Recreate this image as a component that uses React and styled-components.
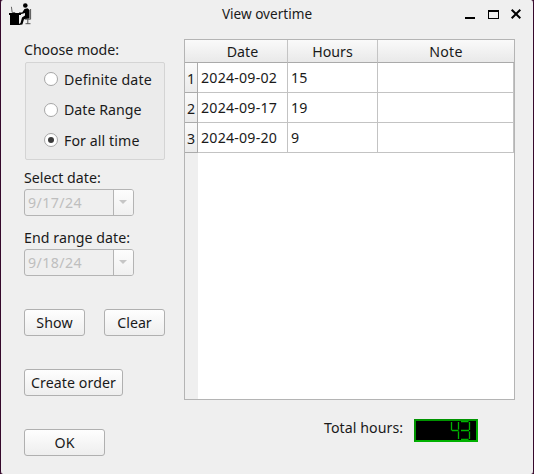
import React from "react";
import styled, { createGlobalStyle } from "styled-components";

const GlobalStyle = createGlobalStyle`
  body { margin: 0; background: #35082b; overflow: hidden; }
  * { box-sizing: border-box; }
`;

const Window = styled.div`
  width: 534px;
  height: 474px;
  border: solid #35082b;
  border-width: 0 1px;
  border-radius: 3px;
  background: #efefef;
  color: #1a1a1a;
  font: 14.2px/20px "Noto Sans", "Open Sans", sans-serif;
  white-space: nowrap;
`;

const TitleBar = styled.header`
  display: grid;
  grid-template-columns: 80px 1fr 80px;
  height: 28px;
  align-items: center;
`;

const TitleIcon = styled.svg`
  display: block;
  align-self: start;
  width: 24px;
  height: 24px;
  margin: 2px 0 0 7px;
`;

const Text = styled.span`
  letter-spacing: ${(p) => p.$track || 0}px;
`;

const Title = styled.h1`
  margin: 0;
  padding-bottom: 1px;
  font-size: 13.6px;
  font-weight: 400;
  text-align: center;
`;

const WindowControls = styled.svg`
  display: block;
  width: 80px;
  height: 28px;
`;

const Body = styled.main`
  display: grid;
  grid-template-columns: 141px 331px;
  column-gap: 19px;
  padding: 11px 0 0 23px;
`;

const Sidebar = styled.div`
  display: flex;
  flex-direction: column;
  align-items: flex-start;
`;

const FieldLabel = styled.label`
  height: 22px;
  padding-top: 1px;
  margin-top: ${(p) => p.$gap || 0}px;
`;

const ModeGroup = styled.div`
  width: 140px;
  height: 98px;
  margin: 1px 0 0 1px;
  padding: 1px 0 0 18px;
  border: 1px solid #d4d4d4;
  border-radius: 2px;
  background: #ebebeb;
`;

const ModeOption = styled.div`
  display: flex;
  align-items: center;
  gap: 6px;
  height: 30.5px;
`;

const ModeName = styled(Text)`
  padding-top: 1px;
`;

const RadioMark = styled.span`
  display: grid;
  place-items: center;
  flex: none;
  width: 14px;
  height: 14px;
  border: 1px solid #a6a6a6;
  border-radius: 50%;
  background: #fff;

  &::after {
    content: "";
    width: 6px;
    height: 6px;
    border-radius: 50%;
    background: ${(p) => (p.$checked ? "#3c3c3c" : "transparent")};
  }
`;

const DateField = styled.div`
  display: flex;
  width: 110px;
  height: 27px;
  border: 1px solid #b4b4b4;
  border-radius: 3px;
  color: #bebebe;
  overflow: hidden;
`;

const DateValue = styled.span`
  flex: 1;
  padding: 3px 0 0 3px;
`;

const DropArrow = styled.span`
  display: grid;
  place-items: center;
  width: 20px;
  padding: 0 2px 1px 0;
  border-left: 1px solid #b4b4b4;
  background: linear-gradient(#fdfdfd, #f0f0f0);
`;

const Button = styled.button`
  width: ${(p) => p.$width}px;
  height: 27px;
  padding: 1px 0 0;
  border: 1px solid #b0b0b0;
  border-radius: 3px;
  background: linear-gradient(#fefefe, #eeeeee);
  color: inherit;
  font: inherit;
`;

const ButtonRow = styled.div`
  display: flex;
  gap: 19px;
  margin-top: 33px;
`;

const Results = styled.div`
  display: flex;
  flex-direction: column;
`;

const Table = styled.div`
  display: grid;
  grid-template-columns: 13px 90px 90px 136px;
  grid-template-rows: 23px 30px 30px 30px 1fr;
  width: 331px;
  height: 361px;
  border: 1px solid #b4b4b4;
  background: #fff;
`;

const HeaderCell = styled.div`
  border-bottom: 1px solid #aaaaaa;
  border-right: ${(p) => (p.$divider ? "1px solid #c4c4c4" : "none")};
  background: linear-gradient(#fafafa, #e9e9e9);
  line-height: 23px;
  text-align: center;
`;

const RowNumber = styled.div`
  border: solid #ababab;
  border-width: 0 1px 1px 0;
  background: linear-gradient(#fafafa, #ebebeb);
  line-height: 31px;
  text-align: center;
`;

const Cell = styled.div`
  padding-left: 3px;
  border: solid #c3c3c3;
  border-width: 0 1px 1px 0;
  line-height: 29px;
`;

const HeaderFill = styled.div`
  background: #efefef;
`;

const Total = styled.div`
  display: flex;
  align-items: flex-start;
  padding: 18px 0 0 140px;
`;

const TotalLabel = styled.span`
  width: 90px;
`;

const Lcd = styled.div`
  width: 64px;
  height: 23px;
  margin-top: 1px;
  border: 2px solid;
  border-color: #009400 #00b000 #00b000 #009400;
  background: #000;
`;

const Digits = styled.svg`
  display: block;
  width: 60px;
  height: 19px;
`;

const modes = [
  { name: "Definite date", track: 0.15 },
  { name: "Date Range", track: 0 },
  { name: "For all time", track: 0.08, checked: true },
];

const rows = [
  ["2024-09-02", "15", ""],
  ["2024-09-17", "19", ""],
  ["2024-09-20", "9", ""],
];

function DateInput({ value }) {
  return (
    <DateField>
      <DateValue><Text $track={0.4}>{value}</Text></DateValue>
      <DropArrow>
        <svg width="8" height="4" viewBox="0 0 8 4"><path d="M0 0h8L4 4z" fill="#c6c6c6" /></svg>
      </DropArrow>
    </DateField>
  );
}

export default function App() {
  return (
    <>
      <GlobalStyle />
      <Window>
        <TitleBar>
          <TitleIcon viewBox="0 0 24 24">
            <circle cx="17.3" cy="3.5" r="2.3" />
            <path d="M1 11h12v2h-2v10H2V13H1z" />
            <path d="M16.5 7l3-.8 2 1.8v8.5l-5.5.7-1.6 5.3L11 23v-1l1.5-1 1.5-5.5 3-2V11l-3.5 1-2.5-.6v-1l3.2.2z" />
            <path d="M3.4 4.8l.8 5.7h3" fill="none" stroke="#666" strokeWidth="1" />
            <path d="M22.6 7v10.2H17M19.8 17v5M17.5 21.7h5" fill="none" stroke="#555" strokeWidth="1" />
          </TitleIcon>
          <Title><Text>View overtime</Text></Title>
          <WindowControls viewBox="453 0 80 28">
            <path d="M465 17h10v2h-10z" />
            <path d="M488 10h11v9h-11zM489 12v6h9v-6z" fillRule="evenodd" />
            <path d="M511.7 9.7l8.6 8.6M520.3 9.7l-8.6 8.6" stroke="#000" strokeWidth="2" />
          </WindowControls>
        </TitleBar>
        <Body>
          <Sidebar>
            <FieldLabel><Text $track={-0.07}>Choose mode:</Text></FieldLabel>
            <ModeGroup role="radiogroup">
              {modes.map((m) => (
                <ModeOption key={m.name}>
                  <RadioMark $checked={m.checked} />
                  <ModeName $track={m.track}>{m.name}</ModeName>
                </ModeOption>
              ))}
            </ModeGroup>
            <FieldLabel $gap={7}><Text>Select date:</Text></FieldLabel>
            <DateInput value="9/17/24" />
            <FieldLabel $gap={11}><Text $track={0.05}>End range date:</Text></FieldLabel>
            <DateInput value="9/18/24" />
            <ButtonRow>
              <Button $width={61}><Text $track={0.1}>Show</Text></Button>
              <Button $width={61}><Text>Clear</Text></Button>
            </ButtonRow>
            <ButtonRow><Button $width={99}><Text $track={0.08}>Create order</Text></Button></ButtonRow>
            <ButtonRow><Button $width={81}><Text>OK</Text></Button></ButtonRow>
          </Sidebar>
          <Results>
            <Table>
              <HeaderCell />
              <HeaderCell $divider><Text>Date</Text></HeaderCell>
              <HeaderCell $divider><Text>Hours</Text></HeaderCell>
              <HeaderCell><Text $track={0.2}>Note</Text></HeaderCell>
              {rows.map((row, i) => (
                <React.Fragment key={row[0]}>
                  <RowNumber>{i + 1}</RowNumber>
                  {row.map((value, j) => (
                    <Cell key={j}><Text $track={0.2}>{value}</Text></Cell>
                  ))}
                </React.Fragment>
              ))}
              <HeaderFill />
            </Table>
            <Total>
              <TotalLabel><Text $track={0.05}>Total hours:</Text></TotalLabel>
              <Lcd>
                <Digits viewBox="416 421 60 19" fill="none" stroke="#00b400" strokeWidth="1.3">
                  <path d="M451.5 422v8.5M452 430.5h6.5M458.5 422v7.5M458.5 431.5v7.5" />
                  <path d="M461 421.6h7.5M461 430.5h8M461 439.4h7.5M469.5 422v8M469.5 431.5v7.5" />
                </Digits>
              </Lcd>
            </Total>
          </Results>
        </Body>
      </Window>
    </>
  );
}
